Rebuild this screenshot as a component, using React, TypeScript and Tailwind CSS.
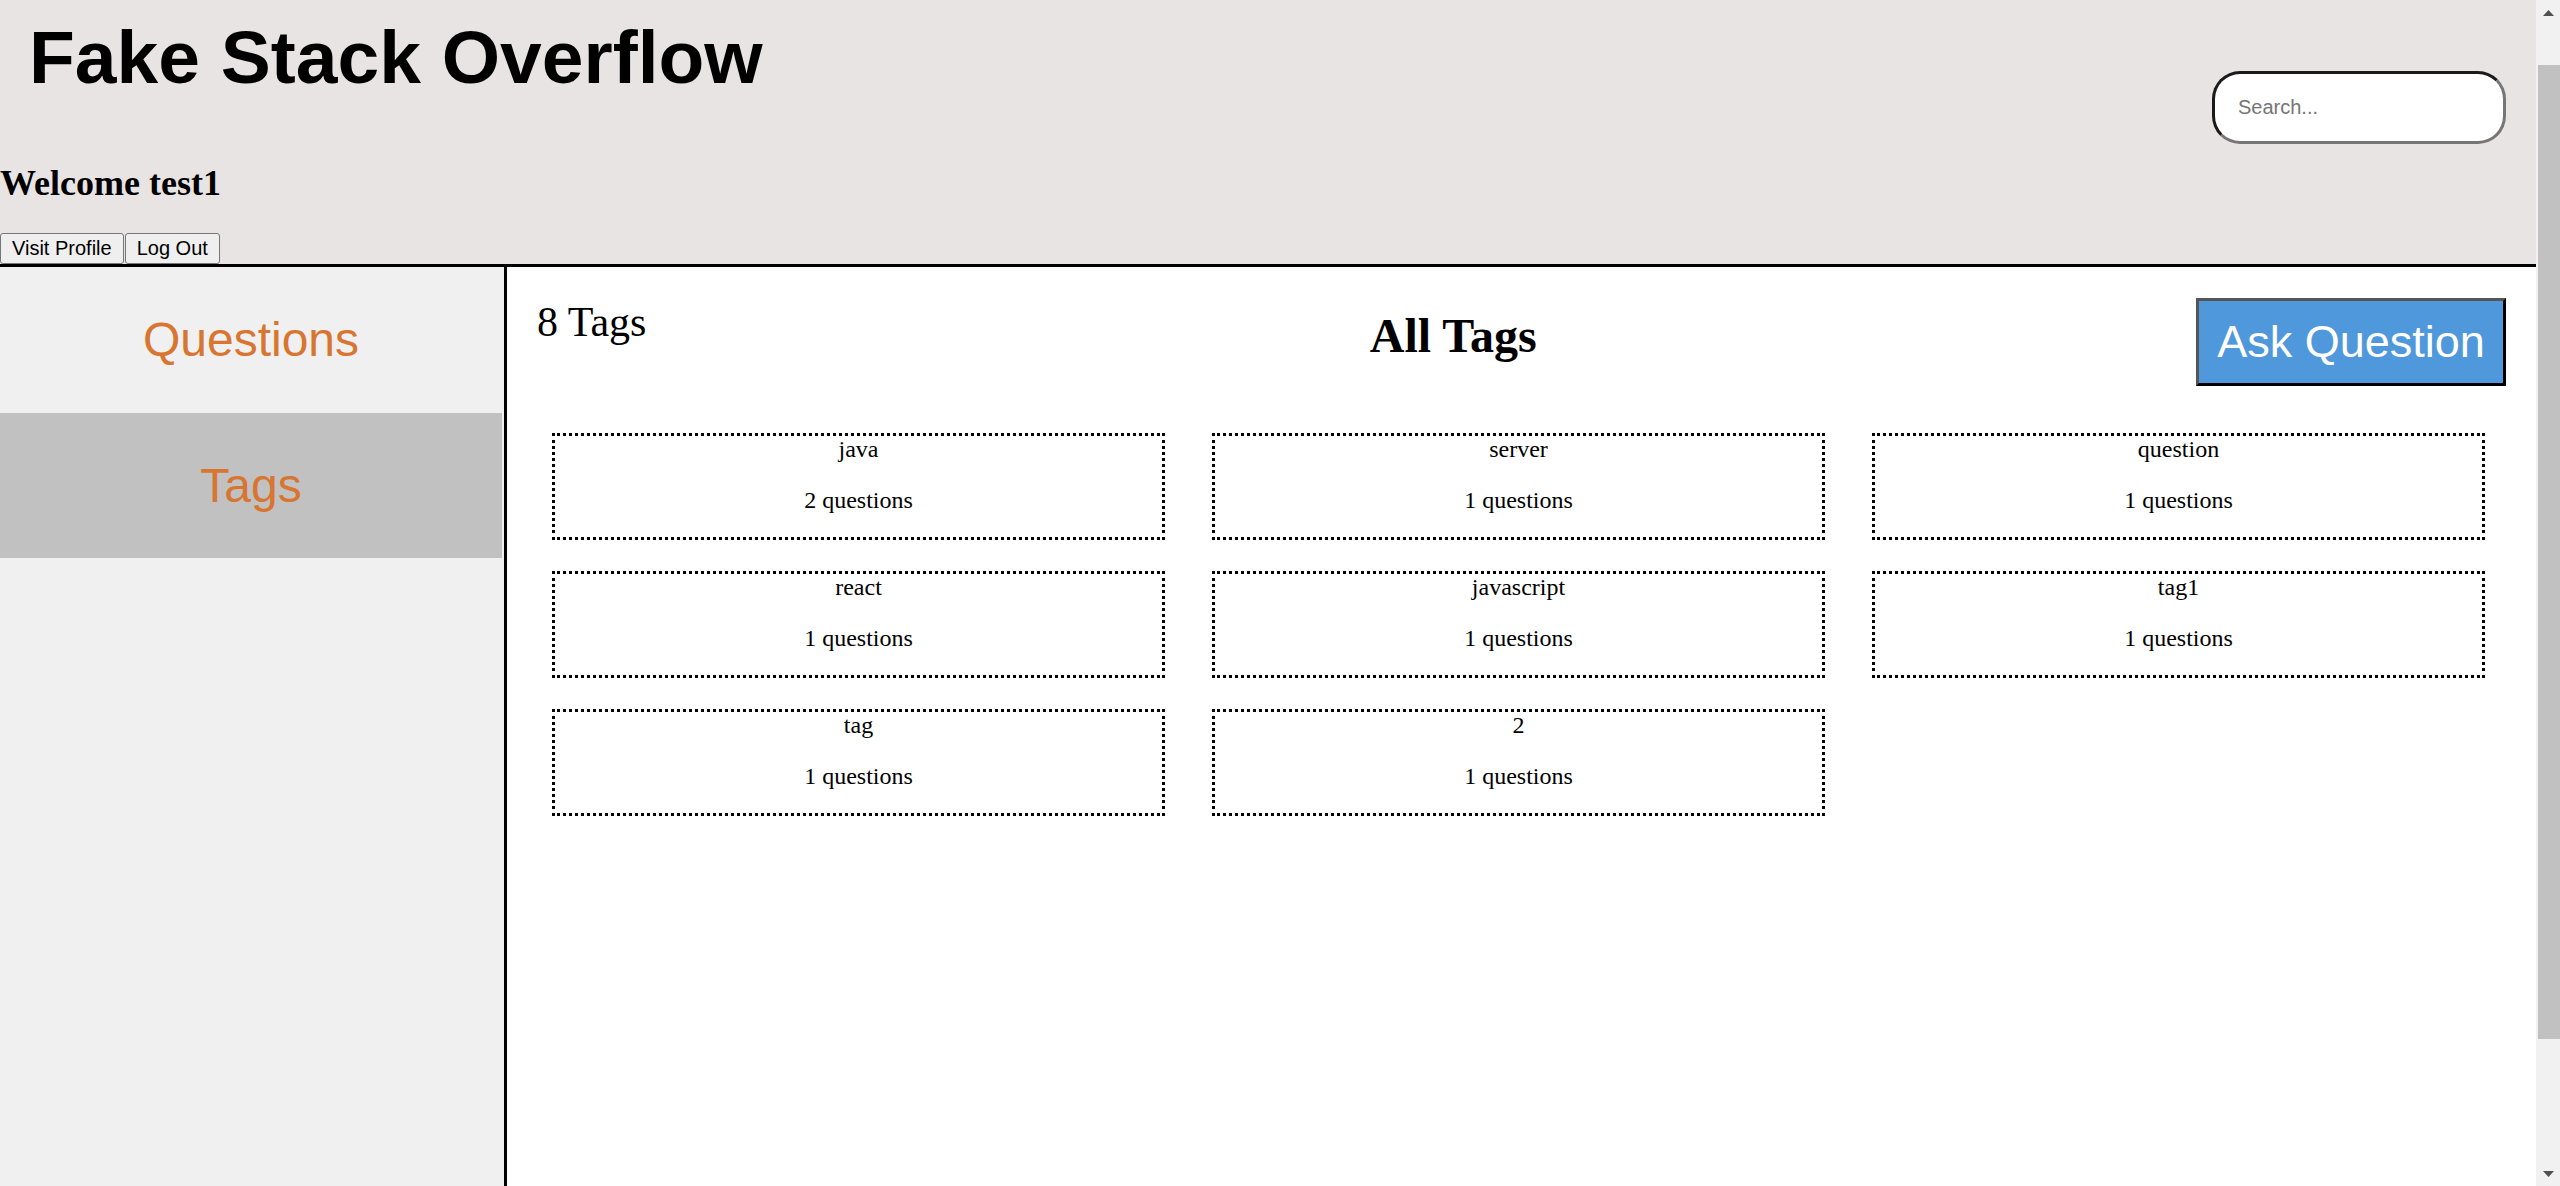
import React from "react";

const tags: [string, number][] = [
  ["java", 2],
  ["server", 1],
  ["question", 1],
  ["react", 1],
  ["javascript", 1],
  ["tag1", 1],
  ["tag", 1],
  ["2", 1],
];

function TagCard({ name, count }: { name: string; count: number }) {
  return (
    <div className="h-[107px] border-[3px] border-dotted border-black text-center font-['Liberation_Serif','Times_New_Roman',serif] text-[24px] text-black">
      <div className="leading-[27px]">{name}</div>
      <p className="mt-[24px] leading-[27px]">{count} questions</p>
    </div>
  );
}

export default function App() {
  return (
    <div className="flex h-[1186px] w-[2560px] overflow-hidden bg-white">
      <div className="flex min-w-0 flex-1 flex-col">
        <header className="flex justify-between border-b-[3px] border-black bg-[#e8e4e3] pr-[30px]">
          <div className="flex flex-col">
            <h1 className="ml-[29px] mt-[14px] font-['Liberation_Sans',Arial,sans-serif] text-[75px] font-bold leading-[86px] text-black">
              Fake Stack Overflow
            </h1>
            <h2 className="mt-[63px] font-['Liberation_Serif','Times_New_Roman',serif] text-[36px] font-bold leading-[41px] text-black">
              Welcome test1
            </h2>
            <div className="mt-[29px] flex gap-[1px]">
              <button className="rounded-[3px] border border-[#767676] bg-[#efefef] px-[11px] py-[3px] font-['Liberation_Sans',Arial,sans-serif] text-[20px] leading-[23px] text-black">
                Visit Profile
              </button>
              <button className="rounded-[3px] border border-[#767676] bg-[#efefef] px-[11px] py-[3px] font-['Liberation_Sans',Arial,sans-serif] text-[20px] leading-[23px] text-black">
                Log Out
              </button>
            </div>
          </div>
          <input
            placeholder="Search..."
            className="mt-[71px] h-[73px] w-[294px] rounded-[28px] border-[3px] border-t-[#1a1a1a] border-l-[#1a1a1a] border-r-[#767676] border-b-[#767676] bg-white pl-[23px] font-['Liberation_Sans',Arial,sans-serif] text-[20px] text-black outline-none placeholder:text-[#757575]"
          />
        </header>
        <div className="flex min-h-0 flex-1">
          <nav className="w-[507px] shrink-0 border-r-[3px] border-black bg-[#f0f0f0] font-['Liberation_Sans',Arial,sans-serif] text-[48px] text-[#d87530]">
            <div className="flex h-[146px] w-[502px] items-center justify-center">Questions</div>
            <div className="flex h-[145px] w-[502px] items-center justify-center bg-[#c1c1c1]">Tags</div>
          </nav>
          <main className="min-w-0 flex-1 bg-white">
            <div className="flex items-start justify-between px-[30px] pt-[31px]">
              <div className="font-['Liberation_Serif','Times_New_Roman',serif] text-[42px] leading-[48px] text-black">
                8 Tags
              </div>
              <h1 className="mt-[10px] pl-[64px] font-['Liberation_Serif','Times_New_Roman',serif] text-[48px] font-bold leading-[55px] text-black">
                All Tags
              </h1>
              <button className="h-[88px] w-[310px] border-[3px] border-t-[#555555] border-l-[#555555] border-r-black border-b-black bg-[#5098dc] font-['Liberation_Sans',Arial,sans-serif] text-[45px] leading-[52px] text-white">
                Ask Question
              </button>
            </div>
            <div className="mt-[47px] grid grid-cols-[613px_613px_613px] gap-x-[47px] gap-y-[31px] pl-[45px]">
              {tags.map(([n, c]) => (
                <TagCard key={n} name={n} count={c} />
              ))}
            </div>
          </main>
        </div>
      </div>
      <div className="flex w-[24px] shrink-0 flex-col bg-[#f1f1f1]">
        <div className="flex h-[65px] justify-center pt-[10px]">
          <svg width="11" height="6" viewBox="0 0 11 6">
            <polygon points="5.5,0 11,6 0,6" fill="#505050" />
          </svg>
        </div>
        <div className="ml-[2px] h-[974px] bg-[#c1c1c1]" />
        <div className="flex flex-1 items-end justify-center pb-[9px]">
          <svg width="11" height="6" viewBox="0 0 11 6">
            <polygon points="0,0 11,0 5.5,6" fill="#505050" />
          </svg>
        </div>
      </div>
    </div>
  );
}
